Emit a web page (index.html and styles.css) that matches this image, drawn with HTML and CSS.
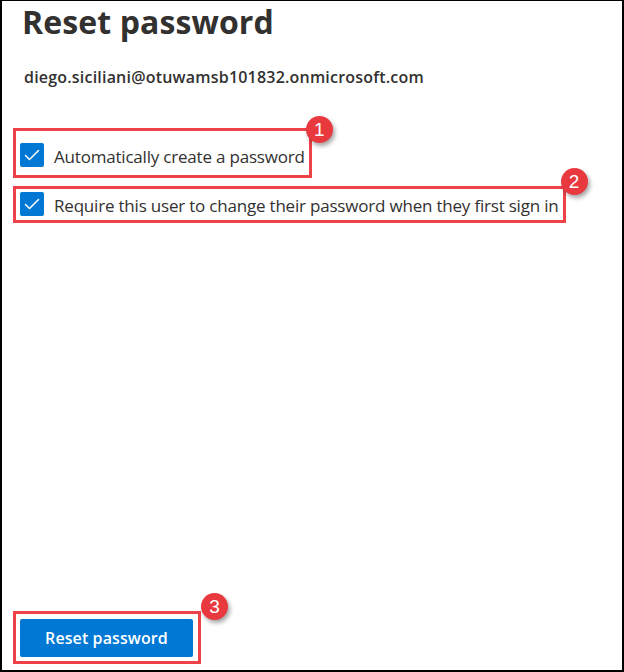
FILE: index.html
```html
<!DOCTYPE html>
<html lang="en">
<head>
<meta charset="utf-8">
<title>Reset password</title>
<link rel="stylesheet" href="styles.css">
</head>
<body>
<div class="panel">
  <h1 class="title">Reset password</h1>
  <p class="email">diego.siciliani@otuwamsb101832.onmicrosoft.com</p>
  <div class="options">
    <div class="mark mark-1">
      <label class="check">
        <span class="box"><svg width="24" height="24" viewBox="0 0 24 24"><path d="M5.5 12.5 L9.5 16.5 L18.5 7.5" fill="none" stroke="#fff" stroke-width="1.5" stroke-linecap="round" stroke-linejoin="round"/></svg></span>
        <span class="label">Automatically create a password</span>
      </label>
      <span class="badge badge-1">1</span>
    </div>
    <div class="mark mark-2">
      <label class="check">
        <span class="box"><svg width="24" height="24" viewBox="0 0 24 24"><path d="M5.5 12.5 L9.5 16.5 L18.5 7.5" fill="none" stroke="#fff" stroke-width="1.5" stroke-linecap="round" stroke-linejoin="round"/></svg></span>
        <span class="label">Require this user to change their password when they first sign in</span>
      </label>
      <span class="badge badge-2">2</span>
    </div>
  </div>
  <div class="footer">
    <div class="mark mark-3">
      <button class="primary" type="button">Reset password</button>
      <span class="badge badge-3">3</span>
    </div>
  </div>
</div>
</body>
</html>
```
FILE: styles.css
```css
* { box-sizing: border-box; }
html, body { margin: 0; padding: 0; background: #fff; }
body { font-family: "Open Sans", "Noto Sans", sans-serif; color: #323130; }

.panel {
  width: 624px;
  height: 672px;
  border-style: solid;
  border-color: #000;
  border-width: 1px 2px 2px 2px;
  display: flex;
  flex-direction: column;
  padding: 0 0 6px 11px;
}

.title {
  margin: 0;
  padding-left: 9px;
  font-size: 32px;
  font-weight: 700;
  line-height: 42px;
  letter-spacing: 0.1px;
  color: #323130;
}

.email {
  margin: 23px 0 0 0;
  padding-left: 11px;
  font-size: 16px;
  font-weight: 600;
  line-height: 22px;
  letter-spacing: 0.2px;
}

.options {
  margin-top: 40px;
  display: flex;
  flex-direction: column;
  align-items: flex-start;
  gap: 8px;
}

.mark {
  position: relative;
  border: 3px solid #ef4148;
  display: flex;
  align-items: center;
}

.mark-1 { padding: 10px 4px 6px 4px; }
.mark-2 { padding: 1px 4px 2px 4px; }
.mark-3 { padding: 5px 5px 4px 4px; }

.check {
  display: flex;
  align-items: center;
  gap: 10px;
  cursor: pointer;
}

.box {
  width: 24px;
  height: 24px;
  border-radius: 2px;
  background: #0078d4;
  display: flex;
  flex: none;
}

.label {
  padding-top: 4px;
  font-size: 17px;
  line-height: 24px;
  letter-spacing: -0.2px;
  color: #323130;
}

.footer {
  margin-top: auto;
  display: flex;
}

.primary {
  width: 173px;
  height: 38px;
  border: 0;
  border-radius: 2px;
  background: #0078d4;
  color: #fff;
  font-family: "Open Sans", "Noto Sans", sans-serif;
  font-size: 16px;
  font-weight: 600;
  letter-spacing: 0.1px;
  padding: 0;
}

.badge {
  position: absolute;
  width: 27px;
  height: 27px;
  border-radius: 50%;
  background: #e8393f;
  color: #fff;
  font-family: "Liberation Sans", sans-serif;
  font-size: 19px;
  font-weight: 400;
  line-height: 27px;
  text-align: center;
  box-shadow: 2px 3px 4px rgba(0, 0, 0, 0.35);
}

.badge-1 { right: -24px; top: -15px; }
.badge-2 { right: -25px; top: -21px; }
.badge-3 { right: -30px; top: -21px; }
```
